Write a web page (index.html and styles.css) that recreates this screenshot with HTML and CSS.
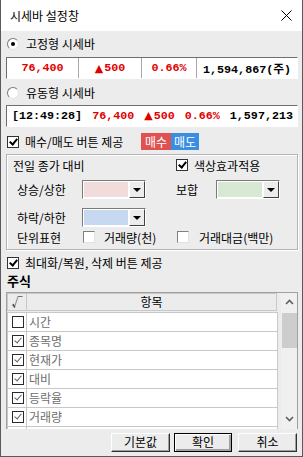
FILE: index.html
```html
<html>

<head>
    <meta charset="utf-8">
    <link rel="stylesheet" href="styles.css">
</head>

<body>
    <div class="window">
        <div class="titlebar">
            <span>시세바 설정창</span>
            <svg class="close" width="11" height="11" viewBox="0 0 11 11">
                <path d="M0.5 0.5 L10.5 10.5 M10.5 0.5 L0.5 10.5" stroke="#000" stroke-width="1" />
            </svg>
        </div>
        <div class="content">
            <div class="row radio-row">
                <span class="radio on"></span>
                <span>고정형 시세바</span>
            </div>
            <div class="box ticker-fixed">
                <div class="cell red">76,400</div>
                <div class="cell red"><span class="tri">▲</span>500</div>
                <div class="cell red">0.66%</div>
                <div class="cell">1,594,867(주)</div>
            </div>
            <div class="row radio-row second">
                <span class="radio"></span>
                <span>유동형 시세바</span>
            </div>
            <div class="box ticker-flow">
                <span>[12:49:28]</span>
                <span class="red">76,400</span>
                <span class="red"><span class="tri">▲</span>500</span>
                <span class="red">0.66%</span>
                <span>1,597,213</span>
            </div>
            <div class="row trade-row">
                <span class="cb on"></span>
                <span class="trade-label">매수/매도 버튼 제공</span>
                <span class="tag buy">매수</span>
                <span class="tag sell">매도</span>
            </div>

            <div class="group">
                <div class="g-row first">
                    <span class="g-title">전일 종가 대비</span>
                    <span class="cb on"></span>
                    <span class="g-check-label">색상효과적용</span>
                </div>
                <div class="g-row combo-row">
                    <span class="g-label">상승/상한</span>
                    <span class="combo"><span class="swatch pink"></span><span class="drop"></span></span>
                    <span class="g-label2">보합</span>
                    <span class="combo"><span class="swatch green"></span><span class="drop"></span></span>
                </div>
                <div class="g-row combo-row second">
                    <span class="g-label">하락/하한</span>
                    <span class="combo"><span class="swatch blue"></span><span class="drop"></span></span>
                </div>
                <div class="g-row unit-row">
                    <span class="g-label unit">단위표현</span>
                    <span class="cb off"></span>
                    <span class="unit-text">거래량(천)</span>
                    <span class="cb off"></span>
                    <span class="unit-text last">거래대금(백만)</span>
                </div>
            </div>

            <div class="row max-row">
                <span class="cb on"></span>
                <span class="trade-label">최대화/복원, 삭제 버튼 제공</span>
            </div>
            <div class="row section">주식</div>

            <div class="list">
                <div class="cols">
                    <div class="head">
                        <span class="c1">√</span>
                        <span class="c2">항목</span>
                    </div>
                    <div class="item"><span class="c1"><span class="tb"></span></span><span class="c2">시간</span></div>
                    <div class="item"><span class="c1"><span class="tb on"></span></span><span class="c2">종목명</span></div>
                    <div class="item"><span class="c1"><span class="tb on"></span></span><span class="c2">현재가</span></div>
                    <div class="item"><span class="c1"><span class="tb on"></span></span><span class="c2">대비</span></div>
                    <div class="item"><span class="c1"><span class="tb on"></span></span><span class="c2">등락율</span></div>
                    <div class="item"><span class="c1"><span class="tb on"></span></span><span class="c2">거래량</span></div>
                    <div class="item"><span class="c1"></span><span class="c2"></span></div>
                </div>
                <div class="scroll">
                    <svg class="arrow" width="9" height="6" viewBox="0 0 9 6">
                        <path d="M1 5 L4.5 1.5 L8 5" stroke="#606060" stroke-width="1.6" fill="none" />
                    </svg>
                    <div class="thumb"></div>
                    <svg class="arrow down" width="9" height="6" viewBox="0 0 9 6">
                        <path d="M1 1 L4.5 4.5 L8 1" stroke="#606060" stroke-width="1.6" fill="none" />
                    </svg>
                </div>
            </div>

            <div class="buttons">
                <span class="btn">기본값</span>
                <span class="btn default">확인</span>
                <span class="btn">취소</span>
            </div>
        </div>
    </div>
</body>

</html>
```

FILE: styles.css
```css
* {
    margin: 0;
    padding: 0;
    box-sizing: border-box;
}

body {
    width: 303px;
    height: 457px;
    font: 12px "Noto Sans CJK KR", sans-serif;
    color: #000;
    background: #fff;
}

.window {
    width: 303px;
    height: 457px;
    border: 1px solid #5a5a5a;
    border-top: none;
    background: #ececec;
}

.titlebar {
    height: 31px;
    background: #fff;
    display: flex;
    align-items: center;
    justify-content: space-between;
    padding: 0 9px 0 9px;
    font-size: 12px;
}

.close {
    margin-right: 1px;
}

.content {
    padding: 0 4px 0 5px;
}

.row {
    display: flex;
    align-items: center;
    height: 16px;
    line-height: 16px;
}

.radio-row {
    margin-top: 5px;
    padding-left: 1px;
}

.radio-row.second {
    margin-top: 6px;
}

.radio {
    position: relative;
    width: 12px;
    height: 12px;
    border-radius: 50%;
    border: 1px solid;
    border-color: #7a7a7a #e4e4e4 #e4e4e4 #7a7a7a;
    background: #fff;
    margin-right: 7px;
}

.radio.on::after {
    content: "";
    position: absolute;
    left: 3px;
    top: 3px;
    width: 4px;
    height: 4px;
    border-radius: 50%;
    background: #000;
}

.box {
    height: 22px;
    border: 1px solid;
    border-color: #6e6e6e #fff #fff #6e6e6e;
    background: #fff;
    font: bold 11.7px "Liberation Mono", "DejaVu Sans Mono", "Noto Sans CJK KR", monospace;
}

.tri {
    font: 11px "DejaVu Sans", sans-serif;
    margin-right: 1px;
}

.ticker-fixed {
    margin-top: 5px;
    display: grid;
    grid-template-columns: 71px 63px 55px 1fr;
}

.ticker-fixed .cell {
    display: flex;
    align-items: center;
    justify-content: center;
    white-space: nowrap;
}

.ticker-fixed .cell + .cell {
    border-left: 1px solid #a8a8a8;
}

.ticker-flow {
    margin-top: 4px;
    display: flex;
    align-items: center;
    gap: 10px;
    padding-left: 5px;
    white-space: nowrap;
}

.red {
    color: #e00000;
}

.trade-row {
    margin-top: 6px;
    height: 17px;
    padding-left: 1px;
}

.cb {
    position: relative;
    flex: none;
    width: 12px;
    height: 12px;
    background: #fff;
    border: 1px solid #333;
}

.cb.off {
    border-color: #808080 #e2e2e2 #e2e2e2 #808080;
}

.cb.on::after,
.tb.on::after {
    content: "";
    position: absolute;
    left: 3px;
    top: 0px;
    width: 3px;
    height: 6px;
    border: solid #000;
    border-width: 0 2px 2px 0;
    transform: rotate(40deg);
}

.trade-label {
    margin-left: 6px;
}

.trade-row .trade-label {
    width: 116px;
}

.tag {
    height: 17px;
    line-height: 17px;
    color: #fff;
    text-align: center;
}

.buy {
    width: 30px;
    background: #e05252;
}

.sell {
    width: 28px;
    background: #3a8ee2;
}

.group {
    margin-top: 4px;
    height: 96px;
    border: 1px solid #b4b4b4;
    box-shadow: inset 1px 1px #fff, 1px 1px #fff;
}

.g-row {
    display: flex;
    align-items: center;
    height: 16px;
}

.g-row.first {
    margin-top: 2px;
    padding-left: 6px;
}

.g-title {
    width: 163px;
}

.g-check-label {
    margin-left: 6px;
}

.combo-row {
    margin-top: 7px;
    height: 19px;
    padding-left: 10px;
}

.combo-row.second {
    margin-top: 9px;
}

.g-label {
    width: 65px;
}

.g-label.unit {
    width: 66px;
}

.g-label2 {
    width: 40px;
    margin-left: 30px;
}

.combo {
    display: flex;
    width: 64px;
    height: 19px;
    border: 1px solid;
    border-color: #7a7a7a #fff #fff #7a7a7a;
    background: #fff;
    padding: 1px;
}

.swatch {
    flex: 1;
}

.pink {
    background: #f2dcdb;
}

.green {
    background: #d8e9d3;
}

.blue {
    background: #c7d9f1;
}

.drop {
    position: relative;
    width: 16px;
    margin: -1px -1px -1px 1px;
    background: #ececec;
    border: 1px solid;
    border-color: #fff #404040 #404040 #fff;
}

.drop::after {
    content: "";
    position: absolute;
    left: 3px;
    top: 6px;
    border-left: 4px solid transparent;
    border-right: 4px solid transparent;
    border-top: 4px solid #000;
}

.unit-row {
    margin-top: 2px;
    padding-left: 10px;
}

.unit-text {
    width: 82px;
    padding-left: 9px;
}

.unit-text.last {
    width: auto;
    padding-left: 10px;
}

.max-row {
    margin-top: 5px;
    padding-left: 1px;
}

.section {
    margin-top: 2px;
    padding-left: 1px;
    font-weight: bold;
    font-size: 13px;
}

.list {
    margin-top: 3px;
    height: 137px;
    display: flex;
    border: 1px solid #a0a0a0;
    border-bottom: none;
    background: #ececec;
    overflow: hidden;
}

.cols {
    width: 274px;
}

.head {
    display: flex;
    height: 18px;
    line-height: 16px;
    margin-bottom: 1px;
}

.head span {
    border: 1px solid #c8c8c8;
    background: #ececec;
    text-align: center;
}

.head .c1 {
    width: 20px;
    font-size: 11px;
}

.head .c2 {
    width: 250px;
    border-left: none;
}

.item {
    display: flex;
    width: 271px;
    height: 19px;
    background: #fff;
    border: 1px solid #c8c8c8;
    border-top: none;
}

.head + .item {
    border-top: 1px solid #c8c8c8;
    height: 20px;
}

.item .c1 {
    width: 19px;
    border-right: 1px solid #c8c8c8;
    display: flex;
    align-items: center;
    padding-left: 4px;
}

.item .c2 {
    padding-left: 2px;
    line-height: 17px;
    color: #6e6e6e;
}

.tb {
    position: relative;
    width: 12px;
    height: 12px;
    border: 1px solid #2a2a2a;
    background: #fff;
}

.tb.on::after {
    left: 3px;
    top: 0px;
    width: 3px;
    height: 6px;
    border-color: #606060;
    border-width: 0 1.5px 1.5px 0;
}

.scroll {
    width: 17px;
    margin-left: 3px;
    display: flex;
    flex-direction: column;
    align-items: center;
    background: #f0f0f0;
}

.arrow {
    margin-top: 6px;
}

.thumb {
    width: 15px;
    height: 35px;
    margin-top: 8px;
    background: #cdcdcd;
}

.arrow.down {
    margin-top: auto;
    margin-bottom: 7px;
}

.buttons {
    margin-top: 4px;
    display: flex;
    justify-content: flex-end;
    gap: 4px;
    padding-right: 1px;
}

.btn {
    width: 59px;
    height: 19px;
    line-height: 16px;
    text-align: center;
    background: #ececec;
    border: 1px solid;
    border-color: #fff #303030 #303030 #fff;
    box-shadow: inset -1px -1px #a0a0a0;
}

.btn.default {
    width: 58px;
    margin-right: 2px;
    border: 1px solid #000;
    box-shadow: inset 1px 1px #fff, inset -2px -2px #a0a0a0;
}
```
